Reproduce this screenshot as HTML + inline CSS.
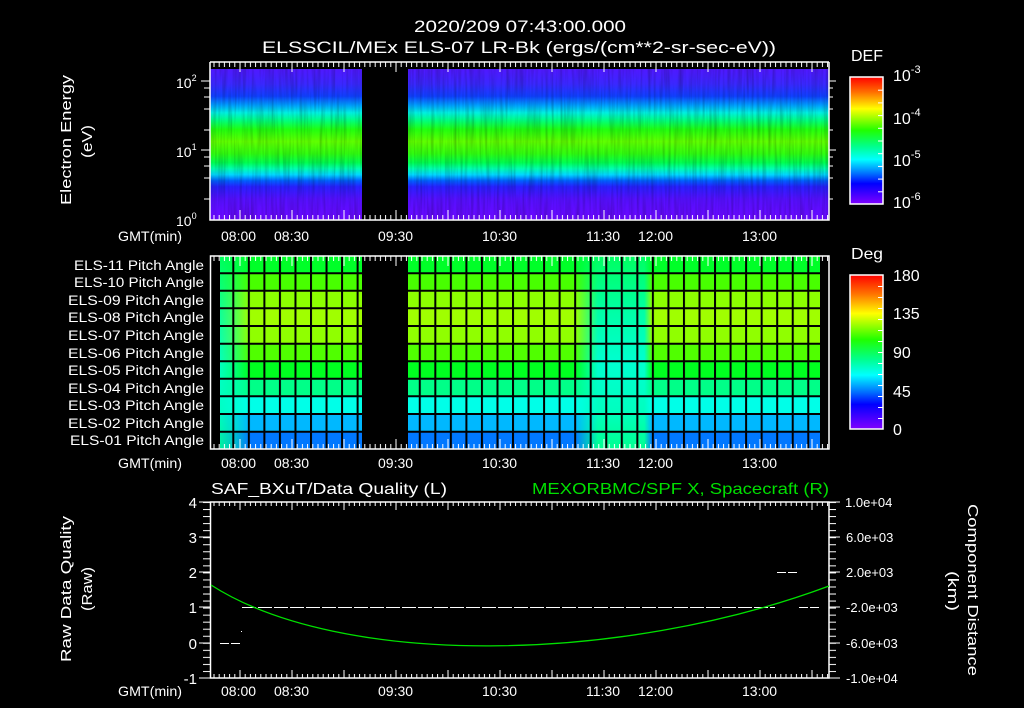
<!DOCTYPE html>
<html><head><meta charset="utf-8"><style>
html,body{margin:0;padding:0;background:#000;width:1024px;height:708px;overflow:hidden}
svg{display:block}
text{font-family:"Liberation Sans",sans-serif;fill:#fff}
</style></head><body>
<svg width="1024" height="708" viewBox="0 0 1024 708" xmlns="http://www.w3.org/2000/svg">
<defs>
<linearGradient id="spec" x1="0" y1="69" x2="0" y2="220" gradientUnits="userSpaceOnUse">
<stop offset="0" stop-color="#5018ff"/>
<stop offset="0.1" stop-color="#3a28ff"/>
<stop offset="0.18" stop-color="#1040ff"/>
<stop offset="0.24" stop-color="#00a0ff"/>
<stop offset="0.29" stop-color="#00f0e0"/>
<stop offset="0.34" stop-color="#00ff80"/>
<stop offset="0.40" stop-color="#20ff10"/>
<stop offset="0.48" stop-color="#60ff00"/>
<stop offset="0.56" stop-color="#30ff10"/>
<stop offset="0.62" stop-color="#00ff50"/>
<stop offset="0.66" stop-color="#00ffb0"/>
<stop offset="0.70" stop-color="#00d8ff"/>
<stop offset="0.74" stop-color="#0060ff"/>
<stop offset="0.78" stop-color="#2820ff"/>
<stop offset="0.86" stop-color="#5510ff"/>
<stop offset="1" stop-color="#6a08ff"/>
</linearGradient>
<linearGradient id="cb" x1="0" y1="0" x2="0" y2="1">
<stop offset="0" stop-color="#ff0000"/>
<stop offset="0.12" stop-color="#ff7000"/>
<stop offset="0.25" stop-color="#ffff00"/>
<stop offset="0.42" stop-color="#20ff00"/>
<stop offset="0.55" stop-color="#00ff90"/>
<stop offset="0.65" stop-color="#00ffff"/>
<stop offset="0.76" stop-color="#0070ff"/>
<stop offset="0.84" stop-color="#0000ff"/>
<stop offset="1" stop-color="#8000ff"/>
</linearGradient>
<linearGradient id="alt" x1="0" y1="256" x2="0" y2="449" gradientUnits="userSpaceOnUse">
<stop offset="0" stop-color="#00ff60"/>
<stop offset="0.3" stop-color="#00ffa8"/>
<stop offset="0.55" stop-color="#00ffd0"/>
<stop offset="0.8" stop-color="#00ffc0"/>
<stop offset="1" stop-color="#00ff90"/>
</linearGradient>
<linearGradient id="fadeM" x1="575" y1="0" x2="652" y2="0" gradientUnits="userSpaceOnUse">
<stop offset="0" stop-color="#fff" stop-opacity="0"/>
<stop offset="0.3" stop-color="#fff" stop-opacity="1"/>
<stop offset="0.9" stop-color="#fff" stop-opacity="1"/>
<stop offset="1" stop-color="#fff" stop-opacity="0"/>
</linearGradient>
<linearGradient id="fadeL" x1="220" y1="0" x2="250" y2="0" gradientUnits="userSpaceOnUse">
<stop offset="0" stop-color="#fff" stop-opacity="0.9"/>
<stop offset="0.4" stop-color="#fff" stop-opacity="0.6"/>
<stop offset="1" stop-color="#fff" stop-opacity="0"/>
</linearGradient>
<mask id="mM"><rect x="570" y="256" width="90" height="193" fill="url(#fadeM)"/></mask>
<mask id="mL"><rect x="220" y="256" width="32" height="193" fill="url(#fadeL)"/></mask>
<pattern id="vgrid" x="232.3" y="0" width="15.54" height="10" patternUnits="userSpaceOnUse">
<rect x="0" y="0" width="2" height="10" fill="#000"/></pattern>
<pattern id="tickT" x="213.5" y="0" width="5.2" height="700" patternUnits="userSpaceOnUse">
<rect x="0" y="0" width="1" height="700" fill="#fff"/></pattern>
<pattern id="tickL" x="0" y="502" width="20" height="7.04" patternUnits="userSpaceOnUse">
<rect x="0" y="0" width="20" height="1" fill="#fff"/></pattern>
<pattern id="tickC" x="0" y="77" width="20" height="12.7" patternUnits="userSpaceOnUse">
<rect x="0" y="0" width="20" height="1" fill="#fff"/></pattern>
<pattern id="tickC2" x="0" y="275" width="20" height="11" patternUnits="userSpaceOnUse">
<rect x="0" y="0" width="20" height="1" fill="#fff"/></pattern>
<filter id="noise" x="0" y="0" width="1" height="1">
<feTurbulence type="fractalNoise" baseFrequency="0.35 0.02" numOctaves="2" seed="4"/>
<feColorMatrix type="matrix" values="0 0 0 0 0  0 0 0 0 0  0 0 0 0 0  0 0 0 1.2 -0.45"/>
</filter>
</defs>

<!-- titles -->
<text x="414" y="32" font-size="17" textLength="212" lengthAdjust="spacingAndGlyphs">2020/209 07:43:00.000</text>
<text x="262" y="53" font-size="17" textLength="514" lengthAdjust="spacingAndGlyphs">ELSSCIL/MEx ELS-07 LR-Bk  (ergs/(cm**2-sr-sec-eV))</text>

<!-- PANEL 1 -->
<rect x="210" y="69" width="619" height="151" fill="url(#spec)"/>
<rect x="210" y="69" width="619" height="151" filter="url(#noise)" opacity="0.35"/>
<rect x="362" y="62" width="46" height="158" fill="#000"/>
<rect x="210" y="62" width="619" height="5" fill="url(#tickT)"/>
<rect x="210" y="215" width="619" height="5" fill="url(#tickT)"/>
<path d="M240 62v10M292 62v10M344 62v10M396 62v10M448 62v10M500 62v10M552 62v10M604 62v10M656 62v10M708 62v10M760 62v10M812 62v10M240 220v-10M292 220v-10M344 220v-10M396 220v-10M448 220v-10M500 220v-10M552 220v-10M604 220v-10M656 220v-10M708 220v-10M760 220v-10M812 220v-10" stroke="#fff" stroke-width="1"/>
<path d="M210 62H829M210 62V220H829V62" stroke="#fff" stroke-width="1.5" fill="none"/>
<path d="M201 81h9M204 88h6M204 97h6M204 109h6M204 130h6M201 150h9M204 157h6M204 166h6M204 178h6M204 199h6M829 81h7M829 88h4M829 97h4M829 109h4M829 130h4M829 150h7M829 157h4M829 166h4M829 178h4M829 199h4" stroke="#fff"/>
<text x="176" y="88" font-size="14">10<tspan font-size="9" dy="-7">2</tspan></text>
<text x="176" y="157" font-size="14">10<tspan font-size="9" dy="-7">1</tspan></text>
<text x="176" y="226" font-size="14">10<tspan font-size="9" dy="-7">0</tspan></text>
<text transform="translate(71,205) rotate(-90)" font-size="15" textLength="130" lengthAdjust="spacingAndGlyphs">Electron Energy</text>
<text transform="translate(92,158) rotate(-90)" font-size="15" textLength="33" lengthAdjust="spacingAndGlyphs">(eV)</text>
<rect x="850" y="77" width="33" height="127" fill="url(#cb)" stroke="#fff" stroke-width="1.5"/>
<rect x="878" y="78" width="5" height="125" fill="url(#tickC)"/>
<text x="851" y="61" font-size="16" textLength="32" lengthAdjust="spacingAndGlyphs">DEF</text>
<text x="893" y="81" font-size="16">10<tspan font-size="11" dy="-8">-3</tspan></text>
<text x="893" y="124" font-size="16">10<tspan font-size="11" dy="-8">-4</tspan></text>
<text x="893" y="166" font-size="16">10<tspan font-size="11" dy="-8">-5</tspan></text>
<text x="893" y="208" font-size="16">10<tspan font-size="11" dy="-8">-6</tspan></text>

<!-- time labels -->
<g font-size="14">
<text x="118" y="241" textLength="64" lengthAdjust="spacingAndGlyphs">GMT(min)</text>
<text x="221" y="241">08:00</text><text x="274" y="241">08:30</text><text x="378" y="241">09:30</text><text x="482" y="241">10:30</text><text x="586" y="241">11:30</text><text x="638" y="241">12:00</text><text x="742" y="241">13:00</text>
<text x="118" y="468" textLength="64" lengthAdjust="spacingAndGlyphs">GMT(min)</text>
<text x="221" y="468">08:00</text><text x="274" y="468">08:30</text><text x="378" y="468">09:30</text><text x="482" y="468">10:30</text><text x="586" y="468">11:30</text><text x="638" y="468">12:00</text><text x="742" y="468">13:00</text>
<text x="118" y="696" textLength="64" lengthAdjust="spacingAndGlyphs">GMT(min)</text>
<text x="221" y="696">08:00</text><text x="274" y="696">08:30</text><text x="378" y="696">09:30</text><text x="482" y="696">10:30</text><text x="586" y="696">11:30</text><text x="638" y="696">12:00</text><text x="742" y="696">13:00</text>
</g>

<!-- PANEL 2 -->
<g>
<rect x="220" y="256" width="600" height="17.5" fill="#00ff28"/>
<rect x="220" y="273.5" width="600" height="17.6" fill="#48ff00"/>
<rect x="220" y="291" width="600" height="17.6" fill="#8cff00"/>
<rect x="220" y="308.6" width="600" height="17.6" fill="#a0ff00"/>
<rect x="220" y="326.2" width="600" height="17.6" fill="#90ff00"/>
<rect x="220" y="343.8" width="600" height="17.6" fill="#50ff00"/>
<rect x="220" y="361.4" width="600" height="17.6" fill="#00ff20"/>
<rect x="220" y="379" width="600" height="17.6" fill="#00ff88"/>
<rect x="220" y="396.6" width="600" height="17.6" fill="#00ffe8"/>
<rect x="220" y="414.2" width="600" height="17.6" fill="#00b8ff"/>
<rect x="220" y="431.8" width="600" height="17.2" fill="#0078ff"/>
<rect x="570" y="256" width="90" height="193" fill="url(#alt)" mask="url(#mM)"/>
<rect x="220" y="256" width="32" height="193" fill="url(#alt)" mask="url(#mL)"/>
<rect x="220" y="256" width="590" height="193" fill="url(#vgrid)"/>
<path d="M220 273.3H820M220 290.7H820M220 308.3H820M220 326H820M220 343.7H820M220 361.3H820M220 378.7H820M220 396.3H820M220 414H820M220 431.7H820" stroke="#000" stroke-width="2"/>
<rect x="362" y="256" width="46" height="193" fill="#000"/>
</g>
<rect x="210" y="256" width="619" height="5" fill="url(#tickT)"/>
<rect x="210" y="444" width="619" height="5" fill="url(#tickT)"/>
<path d="M240 256v10M292 256v10M344 256v10M396 256v10M448 256v10M500 256v10M552 256v10M604 256v10M656 256v10M708 256v10M760 256v10M812 256v10M240 449v-10M292 449v-10M344 449v-10M396 449v-10M448 449v-10M500 449v-10M552 449v-10M604 449v-10M656 449v-10M708 449v-10M760 449v-10M812 449v-10" stroke="#fff"/>
<rect x="210.5" y="256" width="618.5" height="193" fill="none" stroke="#fff" stroke-width="1.5"/>
<g font-size="13.5" text-anchor="end">
<text x="204" y="270" textLength="130" lengthAdjust="spacingAndGlyphs">ELS-11 Pitch Angle</text>
<text x="204" y="287" textLength="130" lengthAdjust="spacingAndGlyphs">ELS-10 Pitch Angle</text>
<text x="204" y="305" textLength="136" lengthAdjust="spacingAndGlyphs">ELS-09 Pitch Angle</text>
<text x="204" y="322" textLength="136" lengthAdjust="spacingAndGlyphs">ELS-08 Pitch Angle</text>
<text x="204" y="340" textLength="136" lengthAdjust="spacingAndGlyphs">ELS-07 Pitch Angle</text>
<text x="204" y="358" textLength="136" lengthAdjust="spacingAndGlyphs">ELS-06 Pitch Angle</text>
<text x="204" y="375" textLength="136" lengthAdjust="spacingAndGlyphs">ELS-05 Pitch Angle</text>
<text x="204" y="393" textLength="136" lengthAdjust="spacingAndGlyphs">ELS-04 Pitch Angle</text>
<text x="204" y="410" textLength="136" lengthAdjust="spacingAndGlyphs">ELS-03 Pitch Angle</text>
<text x="204" y="428" textLength="136" lengthAdjust="spacingAndGlyphs">ELS-02 Pitch Angle</text>
<text x="204" y="445" textLength="134" lengthAdjust="spacingAndGlyphs">ELS-01 Pitch Angle</text>
</g>
<rect x="850" y="275" width="33" height="154" fill="url(#cb)" stroke="#fff" stroke-width="1.5"/>
<rect x="878" y="276" width="5" height="152" fill="url(#tickC2)"/>
<text x="851" y="259" font-size="16" textLength="32" lengthAdjust="spacingAndGlyphs">Deg</text>
<g font-size="16">
<text x="893" y="281">180</text><text x="893" y="319">135</text><text x="893" y="358">90</text><text x="893" y="397">45</text><text x="893" y="435">0</text>
</g>

<!-- PANEL 3 -->
<text x="211" y="494" font-size="16" textLength="236" lengthAdjust="spacingAndGlyphs">SAF_BXuT/Data Quality (L)</text>
<text x="829" y="494" font-size="16" text-anchor="end" style="fill:#00e000" textLength="297" lengthAdjust="spacingAndGlyphs">MEXORBMC/SPF X, Spacecraft (R)</text>
<rect x="203" y="502" width="7" height="176" fill="url(#tickL)"/>
<rect x="829" y="502" width="7" height="176" fill="url(#tickL)"/>
<path d="M199 502h11M199 537h11M199 572h11M199 607h11M199 643h11M199 678h11M829 502h11M829 537h11M829 572h11M829 607h11M829 643h11M829 678h11" stroke="#fff"/>
<rect x="210" y="502" width="619" height="4" fill="url(#tickT)"/>
<rect x="210" y="674" width="619" height="4" fill="url(#tickT)"/>
<path d="M240 502v8M292 502v8M344 502v8M396 502v8M448 502v8M500 502v8M552 502v8M604 502v8M656 502v8M708 502v8M760 502v8M812 502v8M240 678v-8M292 678v-8M344 678v-8M396 678v-8M448 678v-8M500 678v-8M552 678v-8M604 678v-8M656 678v-8M708 678v-8M760 678v-8M812 678v-8" stroke="#fff"/>
<rect x="210.5" y="502" width="618.5" height="176" fill="none" stroke="#fff" stroke-width="1.5"/>
<g shape-rendering="crispEdges">
<path d="M242 607.5H775" stroke="#fff" stroke-width="1" stroke-dasharray="14 2"/>
<path d="M799 607.5H820M777 572.5H799M220 643.5H241" stroke="#fff" stroke-dasharray="9 2"/>
</g>
<rect x="241" y="631" width="1" height="1" fill="#fff"/>
<path d="M211 585C340 668 620 664 829 586" stroke="#00e000" stroke-width="1.3" fill="none"/>
<g font-size="15" text-anchor="end">
<text x="197" y="508">4</text><text x="197" y="543">3</text><text x="197" y="578">2</text><text x="197" y="613">1</text><text x="197" y="649">0</text><text x="197" y="684">-1</text>
</g>
<g font-size="13">
<text x="845" y="507">1.0e+04</text><text x="846" y="542">6.0e+03</text><text x="846" y="577">2.0e+03</text><text x="846" y="612">-2.0e+03</text><text x="846" y="648">-6.0e+03</text><text x="846" y="683">-1.0e+04</text>
</g>
<text transform="translate(71,662) rotate(-90)" font-size="15" textLength="146" lengthAdjust="spacingAndGlyphs">Raw Data Quality</text>
<text transform="translate(92,611) rotate(-90)" font-size="15" textLength="44" lengthAdjust="spacingAndGlyphs">(Raw)</text>
<text transform="translate(968,504) rotate(90)" font-size="15" textLength="172" lengthAdjust="spacingAndGlyphs">Component Distance</text>
<text transform="translate(948,571) rotate(90)" font-size="15" textLength="40" lengthAdjust="spacingAndGlyphs">(km)</text>
</svg>
</body></html>
